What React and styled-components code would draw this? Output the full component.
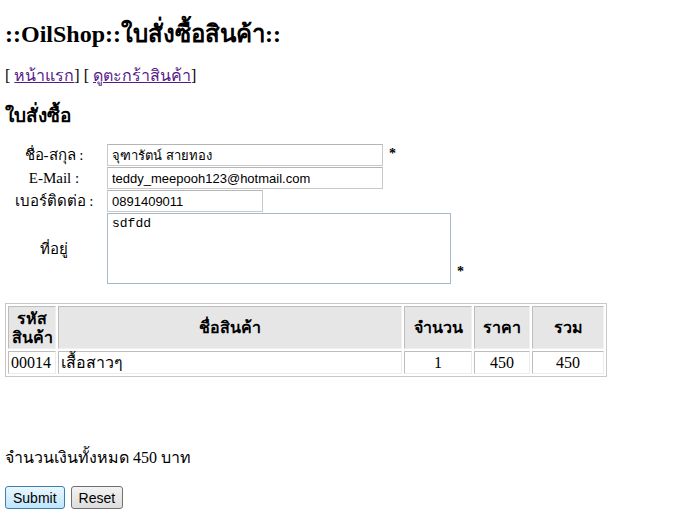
import styled, { createGlobalStyle } from 'styled-components';

const Global = createGlobalStyle`
  body {
    margin: 0;
    background: #fff;
    font-family: "Liberation Serif", "Noto Sans", serif;
    font-size: 16px;
    color: #000;
  }
`;

const Page = styled.div`
  padding: 19px 5px 0 5px;
`;

const Title = styled.h2`
  margin: 0;
  font-size: 24px;
  font-weight: bold;
  line-height: 30px;
`;

const Nav = styled.div`
  margin-top: 17px;
  font-size: 16px;
  line-height: 20px;
  a {
    color: #551a8b;
    text-decoration: underline;
  }
`;

const Heading = styled.h3`
  margin: 18px 0 0 0;
  font-size: 19px;
  font-weight: bold;
  line-height: 24px;
`;

const Form = styled.div`
  margin-top: 16px;
  display: grid;
  grid-template-columns: 98px auto;
  column-gap: 4px;
  row-gap: 1px;
  align-items: center;
`;

const Label = styled.div`
  text-align: center;
  font-size: 15px;
  line-height: 18px;
  font-family: "Liberation Serif", "Noto Sans", serif;
`;

const Field = styled.div`
  display: flex;
  align-items: ${(p) => (p.$bottom ? 'flex-end' : 'flex-start')};
  gap: 6px;
  line-height: 18px;
`;

const Input = styled.input`
  box-sizing: border-box;
  width: ${(p) => p.$w}px;
  height: 22px;
  border: 1px solid #c9c9c9;
  border-top-color: #b5b5b5;
  padding: 1px 4px;
  font-family: "Liberation Sans", Arial, sans-serif;
  font-size: 13px;
  color: #000;
  outline: none;
`;

const Area = styled.textarea`
  box-sizing: border-box;
  width: 344px;
  height: 71px;
  margin: 0;
  display: block;
  border: 1px solid #a9b8c9;
  padding: 2px 4px;
  font-family: "Liberation Mono", monospace;
  font-size: 13px;
  resize: none;
  overflow-y: scroll;
  outline: none;
  &::-webkit-scrollbar {
    width: 16px;
    background: #eef0f2;
    border-left: 1px solid #e2e4e6;
  }
  &::-webkit-scrollbar-thumb {
    background: transparent;
  }
`;

const Star = styled.span`
  font-size: 14px;
  font-weight: bold;
  line-height: 12px;
  margin-top: ${(p) => (p.$bottom ? '0' : '4px')};
  margin-bottom: ${(p) => (p.$bottom ? '6px' : '0')};
`;

const Table = styled.table`
  margin-top: 19px;
  width: 602px;
  border: 1px solid #c8c8c8;
  border-spacing: 2px;
  font-size: 16px;
`;

const Th = styled.th`
  background: #e6e6e6;
  border: 1px solid #bdbdbd;
  border-right-color: #f0f0f0;
  border-bottom-color: #f0f0f0;
  font-weight: bold;
  padding: 1px 2px;
  line-height: 19px;
  height: 39px;
  width: ${(p) => p.$w || 'auto'};
`;

const Td = styled.td`
  border: 1px solid #bdbdbd;
  border-right-color: #ececec;
  border-bottom-color: #ececec;
  padding: 1px 2px;
  height: 19px;
  line-height: 19px;
  text-align: ${(p) => p.$align || 'left'};
`;

const Total = styled.div`
  margin-top: 71px;
  font-size: 16px;
  line-height: 20px;
`;

const Buttons = styled.div`
  margin-top: 18px;
  display: flex;
  gap: 6px;
`;

const Button = styled.button`
  height: 23px;
  padding: 0 7px;
  font-family: "Liberation Sans", Arial, sans-serif;
  font-size: 14px;
  border-radius: 3px;
  border: 1px solid ${(p) => (p.$primary ? '#3c7fb1' : '#707070')};
  background: ${(p) =>
    p.$primary
      ? 'linear-gradient(#eaf6fd, #bee6fd)'
      : 'linear-gradient(#f2f2f2, #dddddd)'};
  color: #000;
`;

export default function App() {
  return (
    <Page>
      <Global />
      <Title>::OilShop::ใบสั่งซื้อสินค้า::</Title>
      <Nav>
        [ <a href="#">หน้าแรก</a>] [ <a href="#">ดูตะกร้าสินค้า</a>]
      </Nav>
      <Heading>ใบสั่งซื้อ</Heading>
      <Form>
        <Label>ชื่อ-สกุล :</Label>
        <Field>
          <Input $w={276} defaultValue="จุฑารัตน์ สายทอง" />
          <Star>*</Star>
        </Field>
        <Label>E-Mail :</Label>
        <Field>
          <Input $w={276} defaultValue="teddy_meepooh123@hotmail.com" />
        </Field>
        <Label>เบอร์ติดต่อ :</Label>
        <Field>
          <Input $w={156} defaultValue="0891409011" />
        </Field>
        <Label>ที่อยู่</Label>
        <Field $bottom>
          <Area defaultValue="sdfdd" />
          <Star $bottom>*</Star>
        </Field>
      </Form>
      <Table>
        <thead>
          <tr>
            <Th $w="42px">รหัส<br />สินค้า</Th>
            <Th>ชื่อสินค้า</Th>
            <Th $w="62px">จำนวน</Th>
            <Th $w="50px">ราคา</Th>
            <Th $w="66px">รวม</Th>
          </tr>
        </thead>
        <tbody>
          <tr>
            <Td>00014</Td>
            <Td>เสื้อสาวๆ</Td>
            <Td $align="center">1</Td>
            <Td $align="center">450</Td>
            <Td $align="center">450</Td>
          </tr>
        </tbody>
      </Table>
      <Total>จำนวนเงินทั้งหมด 450 บาท</Total>
      <Buttons>
        <Button $primary>Submit</Button>
        <Button>Reset</Button>
      </Buttons>
    </Page>
  );
}
